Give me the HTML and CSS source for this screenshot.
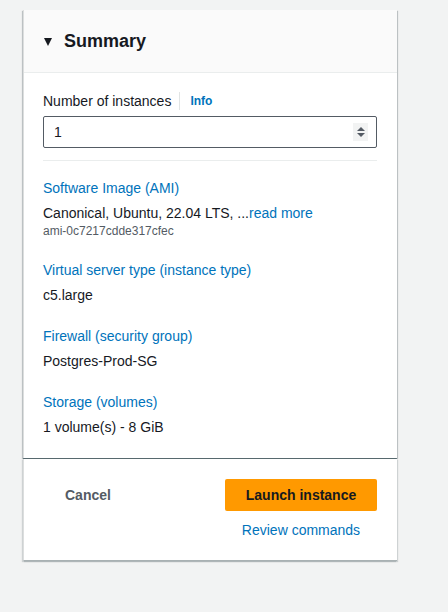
FILE: index.html
```html
<!DOCTYPE html>
<html lang="en">
<head>
    <meta charset="UTF-8">
    <meta name="viewport" content="width=device-width, initial-scale=1.0">
    <title>Summary</title>
    <link rel="stylesheet" href="styles.css">
</head>
<body>
    <div class="panel">
        <div class="summary-card">
            <div class="summary-header">
                <span class="caret"></span>
                <h2>Summary</h2>
            </div>
            <div class="summary-body">
                <div class="field-label">
                    <span>Number of instances</span>
                    <span class="sep"></span>
                    <a class="info" href="#">Info</a>
                </div>
                <div class="num-input">
                    <span>1</span>
                    <span class="spinner">
                        <svg width="10" height="14" viewBox="0 0 10 14"><path d="M1 6 L5 2 L9 6 Z M1 8 L9 8 L5 12 Z" fill="#545b64"/></svg>
                    </span>
                </div>
                <div class="divider"></div>

                <div class="item">
                    <a class="item-title" href="#">Software Image (AMI)</a>
                    <div class="item-value">Canonical, Ubuntu, 22.04 LTS, ...<a href="#">read more</a></div>
                    <div class="item-sub">ami-0c7217cdde317cfec</div>
                </div>
                <div class="item">
                    <a class="item-title" href="#">Virtual server type (instance type)</a>
                    <div class="item-value">c5.large</div>
                </div>
                <div class="item">
                    <a class="item-title" href="#">Firewall (security group)</a>
                    <div class="item-value">Postgres-Prod-SG</div>
                </div>
                <div class="item">
                    <a class="item-title" href="#">Storage (volumes)</a>
                    <div class="item-value">1 volume(s) - 8 GiB</div>
                </div>
            </div>
        </div>

        <div class="footer-card">
            <button class="btn cancel-btn">Cancel</button>
            <div class="actions">
                <button class="btn launch-btn">Launch instance</button>
                <a class="review" href="#">Review commands</a>
            </div>
        </div>
    </div>
</body>
</html>
```

FILE: styles.css
```css
body {
    margin: 0;
    background-color: #f2f3f3;
    font-family: "Liberation Sans", Arial, sans-serif;
    color: #16191f;
}
a {
    color: #0073bb;
    text-decoration: none;
}
.panel {
    width: 374px;
    margin: 10px 0 40px 23px;
}
.summary-card {
    background: white;
    border-left: 1px solid #dcdede;
    box-shadow: 0 1px 1px 0 rgba(0, 28, 36, 0.5), 1px 1px 1px 0 rgba(0, 28, 36, 0.15), -1px 1px 1px 0 rgba(0, 28, 36, 0.15);
}
.summary-header {
    background: #fafafa;
    height: 63px;
    display: flex;
    align-items: center;
    padding-left: 20px;
    border-bottom: 1px solid #eaeded;
    box-sizing: border-box;
}
.caret {
    width: 0;
    height: 0;
    border-left: 4.5px solid transparent;
    border-right: 4.5px solid transparent;
    border-top: 8px solid #16191f;
    margin-right: 12px;
    margin-top: 1px;
}
.summary-header h2 {
    margin: 0;
    font-size: 18px;
    font-weight: bold;
}
.summary-body {
    padding: 18px 20px 21px 19px;
}
.field-label {
    display: flex;
    align-items: center;
    font-size: 14px;
    color: #16191f;
    height: 20px;
}
.sep {
    width: 1px;
    height: 18px;
    background: #e1e4e4;
    margin: 0 10px 0 8px;
}
.info {
    font-size: 12px;
    font-weight: bold;
}
.num-input {
    margin-top: 5px;
    height: 32px;
    box-sizing: border-box;
    border: 1px solid #545b64;
    border-radius: 2px;
    display: flex;
    align-items: center;
    justify-content: space-between;
    padding: 0 8px 0 10px;
    font-size: 14px;
}
.spinner {
    width: 15px;
    height: 18px;
    background: #f2f3f3;
    display: flex;
    align-items: center;
    justify-content: center;
}
.divider {
    height: 1px;
    background: #eaeded;
    margin: 12px 0 17px;
}
.item {
    margin-bottom: 21px;
}
.item:last-child {
    margin-bottom: 0;
}
.item-title {
    display: block;
    font-size: 14px;
    line-height: 20px;
}
.item-value {
    font-size: 14px;
    line-height: 20px;
    margin-top: 5px;
}
.item-sub {
    font-size: 12px;
    color: #545b64;
    line-height: 16px;
}
.footer-card {
    background: white;
    margin-top: 1px;
    height: 102px;
    display: flex;
    justify-content: space-between;
    align-items: flex-start;
    padding: 20px 20px 0 41px;
    box-sizing: border-box;
    border-left: 1px solid #dcdede;
    border-bottom: 1px solid #a9b1b3;
    box-shadow: 1px 1px 1px 0 rgba(0, 28, 36, 0.15), -1px 1px 1px 0 rgba(0, 28, 36, 0.15);
}
.btn {
    font-family: inherit;
    font-size: 14px;
    font-weight: bold;
    border: none;
    cursor: pointer;
    border-radius: 2px;
    height: 32px;
}
.cancel-btn {
    background: none;
    color: #545b64;
    padding: 0;
}
.actions {
    display: flex;
    flex-direction: column;
    align-items: center;
}
.launch-btn {
    background-color: #ff9900;
    color: #16191f;
    width: 152px;
}
.review {
    font-size: 14px;
    margin-top: 11px;
}
```
